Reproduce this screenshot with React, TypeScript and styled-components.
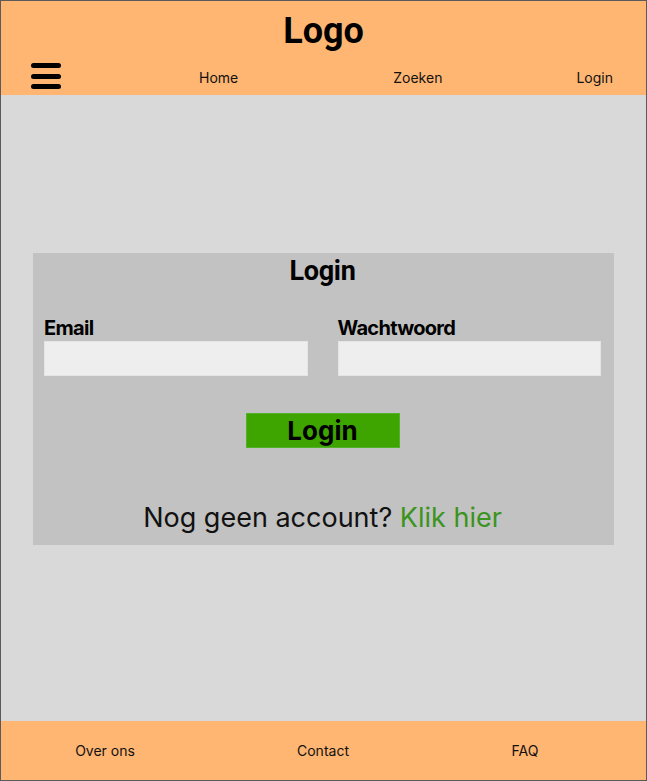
import styled, { createGlobalStyle } from "styled-components";

const GlobalStyle = createGlobalStyle`
  * { box-sizing: border-box; }
  html, body { margin: 0; padding: 0; }
  body {
    font-family: Inter, "Noto Sans", sans-serif;
    color: #000;
  }
`;

const Page = styled.div`
  display: flex;
  flex-direction: column;
  width: 647px;
  height: 781px;
  border: 1px solid #5a5a5a;
  background: #d9d9d9;
`;

const Header = styled.header`
  display: flex;
  flex-direction: column;
  height: 94px;
  background: #ffb673;
`;

const Logo = styled.h1`
  margin: 0;
  padding-top: 9px;
  height: 52px;
  text-align: center;
  font-family: Roboto, "Liberation Sans", sans-serif;
  font-weight: 700;
  font-size: 36px;
  line-height: 42px;
`;

const Nav = styled.nav`
  display: flex;
  align-items: center;
  height: 42px;
  padding: 0 33px 0 30px;
`;

const Burger = styled.button`
  display: flex;
  flex-direction: column;
  justify-content: space-between;
  width: 30px;
  height: 26px;
  margin-top: 4px;
  padding: 0;
  border: none;
  background: none;
  span {
    display: block;
    height: 5px;
    border-radius: 3px;
    background: #000;
  }
`;

const NavLink = styled.a<{ $gap: string }>`
  margin-left: ${({ $gap }) => $gap};
  padding-top: 6px;
  font-size: 14px;
  color: #111;
  text-decoration: none;
`;

const Main = styled.main`
  flex: 1;
  display: flex;
  flex-direction: column;
  justify-content: center;
  padding: 0 32px 18px;
`;

const Card = styled.section`
  display: flex;
  flex-direction: column;
  height: 292px;
  padding: 0 13px 0 11px;
  background: #c2c2c2;
`;

const Title = styled.h2`
  margin: 0;
  padding-top: 2px;
  text-align: center;
  font-family: Roboto, "Liberation Sans", sans-serif;
  font-weight: 700;
  font-size: 27px;
  line-height: 32px;
  letter-spacing: -0.3px;
`;

const Fields = styled.div`
  display: grid;
  grid-template-columns: 1fr 1fr;
  column-gap: 30px;
  margin-top: 29px;
`;

const Field = styled.label`
  display: flex;
  flex-direction: column;
`;

const FieldLabel = styled.span`
  font-weight: 700;
  font-size: 20px;
  line-height: 25px;
  letter-spacing: -0.7px;
`;

const Input = styled.input`
  height: 35px;
  border: 1px solid #e4e4e4;
  background: #eeeeee;
  outline: none;
`;

const SubmitButton = styled.button`
  align-self: center;
  width: 154px;
  height: 35px;
  margin-top: 37px;
  padding: 0;
  border: 1px solid #52b02a;
  background: #3da400;
  font-family: Inter, sans-serif;
  font-weight: 700;
  font-size: 26px;
  line-height: 33px;
  color: #000;
`;

const Signup = styled.p`
  margin: 54px 0 0;
  text-align: center;
  font-size: 27px;
  line-height: 32px;
  color: #111;
`;

const SignupLink = styled.a`
  color: #3a9420;
  text-decoration: none;
`;

const Footer = styled.footer`
  display: grid;
  grid-template-columns: 208px 228px 176px;
  align-items: center;
  height: 59px;
  background: #ffb673;
  font-size: 14px;
  color: #111;
`;

const FooterLink = styled.a`
  justify-self: center;
  color: inherit;
  text-decoration: none;
`;

export default function App() {
  return (
    <>
      <GlobalStyle />
      <Page>
        <Header>
          <Logo>Logo</Logo>
          <Nav>
            <Burger aria-label="menu">
              <span />
              <span />
              <span />
            </Burger>
            <NavLink $gap="138px">Home</NavLink>
            <NavLink $gap="155px">Zoeken</NavLink>
            <NavLink $gap="auto">Login</NavLink>
          </Nav>
        </Header>
        <Main>
          <Card>
            <Title>Login</Title>
            <Fields>
              <Field>
                <FieldLabel>Email</FieldLabel>
                <Input type="email" />
              </Field>
              <Field>
                <FieldLabel>Wachtwoord</FieldLabel>
                <Input type="password" />
              </Field>
            </Fields>
            <SubmitButton>Login</SubmitButton>
            <Signup>
              Nog geen account? <SignupLink>Klik hier</SignupLink>
            </Signup>
          </Card>
        </Main>
        <Footer>
          <FooterLink>Over ons</FooterLink>
          <FooterLink>Contact</FooterLink>
          <FooterLink>FAQ</FooterLink>
        </Footer>
      </Page>
    </>
  );
}
